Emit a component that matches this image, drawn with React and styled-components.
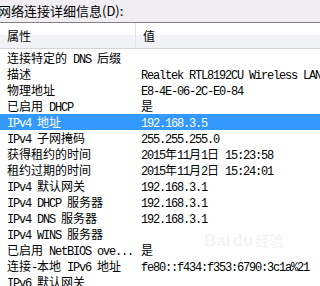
import React from "react";
import styled, { createGlobalStyle } from "styled-components";

const Global = createGlobalStyle`
  html, body { margin: 0; padding: 0; background: #f0eef0; }
  body { font-family: "Noto Sans CJK SC", "Liberation Sans", sans-serif; }
`;

const Page = styled.div`
  width: 320px;
  height: 286px;
  overflow: hidden;
  background: #f0eef0;
  position: relative;
`;

const Caption = styled.div`
  height: 22px;
  display: flex;
  align-items: center;
  margin-left: -2px;
  font-size: 13px;
  line-height: 16px;
  color: #000;
`;

const List = styled.div`
  border-top: 1px solid #828282;
  background: #fff;
  height: 263px;
`;

const Header = styled.div`
  display: grid;
  grid-template-columns: 136px 1fr;
  height: 25px;
  background: linear-gradient(#ffffff 0%, #ffffff 45%, #f3f4f8 50%, #f1f2f6 100%);
  border-bottom: 1px solid #d5d5d5;
`;

const HeadCell = styled.div`
  display: flex;
  align-items: center;
  padding-left: ${(p) => p.$pad}px;
  font-size: 12px;
  color: #000;
  border-right: ${(p) => (p.$divider ? "1px solid #e3e4e8" : "none")};
`;

const Rows = styled.div`
  padding-top: 1px;
`;

const Row = styled.div`
  display: grid;
  grid-template-columns: 140px 1fr;
  height: 16px;
  align-items: center;
  background: ${(p) => (p.$selected ? "#3399ff" : "transparent")};
  color: ${(p) => (p.$selected ? "#fff" : "#000")};
  font-size: 12px;
  line-height: 16px;
`;

const Cell = styled.div`
  padding-left: ${(p) => p.$pad}px;
  white-space: nowrap;
  overflow: hidden;
  height: 16px;
  line-height: 16px;
`;

const Latin = styled.span`
  font-family: "Liberation Mono", monospace;
  font-size: 12px;
  letter-spacing: -1.2px;
`;

const Watermark = styled.div`
  position: absolute;
  left: 204px;
  top: 230px;
  display: flex;
  align-items: baseline;
  gap: 2px;
  color: rgba(120, 120, 120, 0.09);
  font-family: "Liberation Sans", sans-serif;
  font-weight: bold;
  font-size: 17px;
  pointer-events: none;
`;

const WmCn = styled.span`
  font-family: "Noto Sans CJK SC", sans-serif;
  font-size: 14px;
  font-weight: bold;
`;

function Mixed({ text }) {
  const parts = text.match(/[\x20-\x7e]+|[^\x20-\x7e]+/g) || [];
  return parts.map((p, i) =>
    /[\x20-\x7e]/.test(p[0]) ? <Latin key={i}>{p}</Latin> : <span key={i}>{p}</span>
  );
}

const data = [
  ["连接特定的 DNS 后缀", ""],
  ["描述", "Realtek RTL8192CU Wireless LAN 802.11n USB 2.0 Network Adapter"],
  ["物理地址", "E8-4E-06-2C-E0-84"],
  ["已启用 DHCP", "是"],
  ["IPv4 地址", "192.168.3.5", true],
  ["IPv4 子网掩码", "255.255.255.0"],
  ["获得租约的时间", "2015年11月1日 15:23:58"],
  ["租约过期的时间", "2015年11月2日 15:24:01"],
  ["IPv4 默认网关", "192.168.3.1"],
  ["IPv4 DHCP 服务器", "192.168.3.1"],
  ["IPv4 DNS 服务器", "192.168.3.1"],
  ["IPv4 WINS 服务器", ""],
  ["已启用 NetBIOS ove...", "是"],
  ["连接-本地 IPv6 地址", "fe80::f434:f353:6790:3c1a%21"],
  ["IPv6 默认网关", ""],
];

export default function App() {
  return (
    <Page>
      <Global />
      <Caption>网络连接详细信息(D):</Caption>
      <List>
        <Header>
          <HeadCell $pad={7} $divider>属性</HeadCell>
          <HeadCell $pad={7}>值</HeadCell>
        </Header>
        <Rows>
          {data.map(([k, v, sel], i) => (
            <Row key={i} $selected={sel}>
              <Cell $pad={7}><Mixed text={k} /></Cell>
              <Cell $pad={1}><Mixed text={v} /></Cell>
            </Row>
          ))}
        </Rows>
      </List>
      <Watermark>
        <span>Bai</span>
        <span>du</span>
        <WmCn>经验</WmCn>
      </Watermark>
    </Page>
  );
}
